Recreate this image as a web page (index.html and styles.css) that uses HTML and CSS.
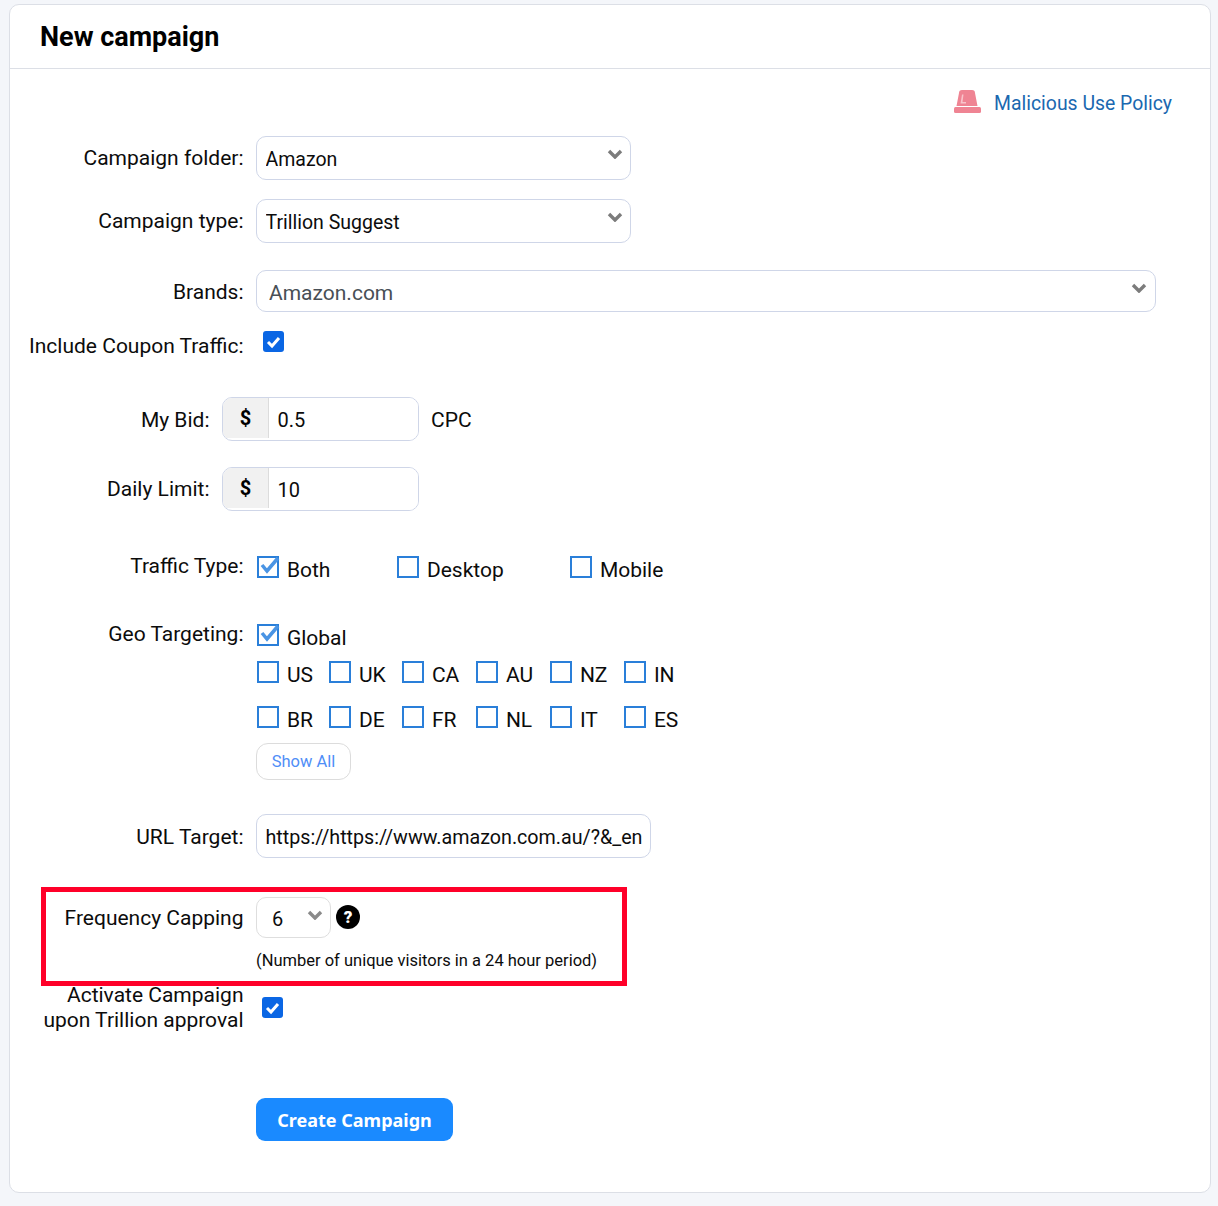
FILE: index.html
```html
<!DOCTYPE html>
<html lang="en">
<head>
<meta charset="utf-8">
<title>New campaign</title>
<link rel="stylesheet" href="styles.css">
</head>
<body>
<main class="card">
  <header class="card-head"><h1 class="title">New campaign</h1></header>
  <form class="form">
    <div class="policy">
      <svg class="siren" width="27" height="23" viewBox="0 0 27 23"><path d="M5 3a3 3 0 0 1 3-3h10a3 3 0 0 1 3 3l2.500 13h-21z" fill="#ef8493"/><path d="M8 4.500h1.500L8.500 12H12v1.500H6.500z" fill="#f8c4cb"/><rect x="0" y="17" width="27" height="6" rx="1.500" fill="#ef8493"/></svg>
      <a class="policy-link" href="#">Malicious Use Policy</a>
    </div>

    <div class="row row-folder">
      <label class="lab lab-sel">Campaign folder:</label>
      <div class="sel-wrap sel-m"><select class="sel"><option>Amazon</option></select><svg class="chev" width="16" height="10" viewBox="0 0 16 10"><path d="M2 2l6 6 6-6" fill="none" stroke="#7c7c7c" stroke-width="3.400"/></svg></div>
    </div>
    <div class="row row-type">
      <label class="lab lab-sel">Campaign type:</label>
      <div class="sel-wrap sel-m"><select class="sel"><option>Trillion Suggest</option></select><svg class="chev" width="16" height="10" viewBox="0 0 16 10"><path d="M2 2l6 6 6-6" fill="none" stroke="#7c7c7c" stroke-width="3.400"/></svg></div>
    </div>
    <div class="row row-brands">
      <label class="lab lab-brands">Brands:</label>
      <div class="sel-wrap sel-l"><select class="sel sel-brands"><option>Amazon.com</option></select><svg class="chev" width="16" height="10" viewBox="0 0 16 10"><path d="M2 2l6 6 6-6" fill="none" stroke="#7c7c7c" stroke-width="3.400"/></svg></div>
    </div>
    <div class="row row-coupon">
      <label class="lab lab-coupon">Include Coupon Traffic:</label>
      <span class="solid-box coupon-box"><svg width="21" height="21" viewBox="0 0 21 21"><path d="M5 11l4 4 7-8" fill="none" stroke="#fff" stroke-width="3"/></svg></span>
    </div>

    <div class="row row-narrow row-bid">
      <label class="lab lab-bid">My Bid:</label>
      <div class="money"><span class="addon">$</span><input class="money-input" value="0.5"></div>
      <span class="cpc">CPC</span>
    </div>
    <div class="row row-narrow row-daily">
      <label class="lab lab-sel">Daily Limit:</label>
      <div class="money"><span class="addon">$</span><input class="money-input" value="10"></div>
    </div>

    <div class="row row-traffic">
      <label class="lab lab-traffic">Traffic Type:</label>
      <div class="traffic-opts">
        <div class="opt"><span class="box"><svg class="tick" width="24" height="22" viewBox="0 0 24 22"><path d="M5 10l5 6 11-13" fill="none" stroke="#4a94e4" stroke-width="3.500"/></svg></span><span class="opt-text">Both</span></div>
        <div class="opt"><span class="box"></span><span class="opt-text">Desktop</span></div>
        <div class="opt"><span class="box"></span><span class="opt-text">Mobile</span></div>
      </div>
    </div>

    <div class="row row-geo">
      <label class="lab">Geo Targeting:</label>
      <div class="geo">
        <div class="opt opt-global"><span class="box"><svg class="tick" width="24" height="22" viewBox="0 0 24 22"><path d="M5 10l5 6 11-13" fill="none" stroke="#4a94e4" stroke-width="3.500"/></svg></span><span class="opt-text">Global</span></div>
        <div class="geo-grid">
          <div class="opt"><span class="box"></span><span class="opt-text">US</span></div>
          <div class="opt"><span class="box"></span><span class="opt-text">UK</span></div>
          <div class="opt"><span class="box"></span><span class="opt-text">CA</span></div>
          <div class="opt"><span class="box"></span><span class="opt-text">AU</span></div>
          <div class="opt"><span class="box"></span><span class="opt-text">NZ</span></div>
          <div class="opt"><span class="box"></span><span class="opt-text">IN</span></div>
          <div class="opt"><span class="box"></span><span class="opt-text">BR</span></div>
          <div class="opt"><span class="box"></span><span class="opt-text">DE</span></div>
          <div class="opt"><span class="box"></span><span class="opt-text">FR</span></div>
          <div class="opt"><span class="box"></span><span class="opt-text">NL</span></div>
          <div class="opt"><span class="box"></span><span class="opt-text">IT</span></div>
          <div class="opt"><span class="box"></span><span class="opt-text">ES</span></div>
        </div>
        <button class="show-all" type="button">Show All</button>
      </div>
    </div>

    <div class="row row-url">
      <label class="lab lab-url">URL Target:</label>
      <input class="url" value="https://https://www.amazon.com.au/?&amp;_encoding=UTF8">
    </div>

    <div class="row row-freq">
      <label class="lab lab-freq">Frequency Capping</label>
      <div class="freq">
        <div class="freq-top">
          <div class="sel-wrap sel-s"><select class="sel sel-freq"><option>6</option></select><svg class="chev" width="16" height="10" viewBox="0 0 16 10"><path d="M2 2l6 6 6-6" fill="none" stroke="#8a8a8a" stroke-width="3.400"/></svg></div>
          <span class="help">?</span>
        </div>
        <p class="note">(Number of unique visitors in a 24 hour period)</p>
      </div>
    </div>

    <div class="row row-activate">
      <label class="lab lab-activate">Activate Campaign<br>upon Trillion approval</label>
      <span class="solid-box activate-box"><svg width="21" height="21" viewBox="0 0 21 21"><path d="M5 11l4 4 7-8" fill="none" stroke="#fff" stroke-width="3"/></svg></span>
    </div>

    <div class="row row-submit">
      <span class="lab"></span>
      <button class="create" type="button">Create Campaign</button>
    </div>
  </form>
  <div class="highlight"></div>
</main>
</body>
</html>
```
FILE: styles.css
```css
* { box-sizing: border-box; }
html, body { margin: 0; padding: 0; }
body {
  background: #f4f6fa;
  padding: 4px 7px 13px 9px;
  font-family: Roboto, "Liberation Sans", sans-serif;
  font-size: 21px;
  color: #0c0c0c;
}
.card {
  position: relative;
  background: #fff;
  border: 1px solid #dcdfe6;
  border-radius: 10px;
}
.card-head {
  height: 64px;
  border-bottom: 1px solid #dcdfe6;
  padding: 15px 0 0 30px;
}
.title {
  margin: 0;
  font-size: 27px;
  line-height: 34px;
  font-weight: 700;
  color: #000;
}
.form { padding-bottom: 51px; }
.policy {
  display: flex;
  justify-content: flex-end;
  align-items: center;
  gap: 13px;
  height: 24px;
  margin-top: 22px;
  padding-right: 38px;
}
.siren { margin-top: -4px; }
.policy-link {
  margin-top: 2px;
  color: #1a68b0;
  text-decoration: none;
  font-size: 19.400px;
  line-height: 24px;
}
.row {
  display: grid;
  grid-template-columns: 233.500px auto 1fr;
  column-gap: 12.500px;
  align-items: start;
}
.row-narrow { grid-template-columns: 199.500px auto 1fr; }
.row-folder { margin-top: 21px; }
.row-type { margin-top: 19px; }
.row-brands { margin-top: 27px; }
.row-coupon { margin-top: 19px; height: 26px; }
.row-bid { margin-top: 40px; }
.row-daily { margin-top: 26px; }
.row-traffic { margin-top: 42px; }
.row-geo { margin-top: 40px; }
.row-url { margin-top: 34px; }
.row-freq { margin-top: 39px; }
.row-activate { margin-top: 11px; }
.row-submit { margin-top: 65px; }
.lab {
  display: block;
  text-align: right;
  line-height: 24px;
  white-space: nowrap;
}
.lab-sel { padding-top: 10px; }
.lab-freq { padding-top: 9px; }
.lab-bid { padding-top: 11px; }
.lab-brands { padding-top: 10px; }
.lab-coupon { padding-top: 3px; }
.lab-traffic { padding-top: 1px; }
.lab-url { padding-top: 11px; }
.lab-activate { line-height: 25px; }
.sel-wrap { position: relative; }
.sel-m { width: 375px; height: 44px; }
.sel-l { width: 900px; height: 42px; }
.sel-s { width: 75px; height: 41px; }
.sel {
  appearance: none;
  width: 100%;
  height: 100%;
  border: 1px solid #cfd6e8;
  border-radius: 10px;
  background: #fff;
  padding: 2px 8.500px 0;
  font: inherit;
  font-size: 19.500px;
  color: #0c0c0c;
}
.sel-brands { padding: 4px 12px 0; color: #484f56; font-size: 21px; }
.sel-freq { padding: 2px 15px 0; border-color: #dedede; font-size: 20px; }
.chev { position: absolute; top: 13px; right: 8px; }
.sel-l .chev { right: 9px; }
.solid-box {
  display: flex;
  width: 21px;
  height: 21px;
  background: #0a66e4;
  border-radius: 3px;
}
.coupon-box { margin-left: 7px; }
.activate-box { margin: 14px 0 0 6px; }
.money {
  display: flex;
  width: 197px;
  height: 44px;
  border: 1px solid #cfd6e8;
  border-radius: 10px;
  overflow: hidden;
}
.addon {
  width: 46px;
  height: 40px;
  flex: none;
  background: #f1f1f1;
  border-right: 1px solid #dcdcdc;
  font-size: 20px;
  font-weight: 700;
  text-align: center;
  line-height: 41px;
  color: #000;
}
.money-input {
  flex: 1;
  min-width: 0;
  border: 0;
  outline: 0;
  padding: 2px 8px 0 8.500px;
  font: inherit;
  font-size: 20px;
  color: #0c0c0c;
}
.cpc { line-height: 24px; padding-top: 11px; margin-left: -0.500px; }
.opt { display: flex; gap: 8.400px; }
.box {
  position: relative;
  display: block;
  flex: none;
  width: 22px;
  height: 22px;
  border: 2px solid #2a7fd9;
}
.tick { position: absolute; top: -3px; left: -2px; }
.opt-text { margin-top: 2px; line-height: 24px; }
.traffic-opts {
  display: grid;
  grid-template-columns: 140px 173px auto;
  margin: 3px 0 0 0.500px;
}
.geo { margin-top: 2px; }
.opt-global { margin-left: 0.500px; }
.geo-grid {
  display: grid;
  grid-template-columns: 72px 73px 74px 74px 74px auto;
  row-gap: 19px;
  margin: 11px 0 11px 0.500px;
}
.show-all {
  display: block;
  width: 95px;
  height: 37px;
  border: 1px solid #dcdcdc;
  border-radius: 12px;
  background: #fff;
  padding: 0;
  font: inherit;
  font-size: 16.500px;
  color: #4f8ef7;
}
.url {
  width: 395px;
  height: 44px;
  border: 1px solid #cfd6e8;
  border-radius: 10px;
  padding: 2px 8px 0 8.500px;
  font: inherit;
  font-size: 19.700px;
  color: #0c0c0c;
  outline: 0;
}
.freq-top { display: flex; gap: 5px; }
.help {
  width: 24px;
  height: 24px;
  margin-top: 8px;
  border-radius: 50%;
  background: #000;
  color: #fff;
  font-size: 17px;
  font-weight: 900;
  line-height: 24px;
  text-align: center;
}
.note {
  margin: 12px 0 0;
  font-size: 16.500px;
  line-height: 22px;
  white-space: nowrap;
}
.create {
  width: 197px;
  height: 43px;
  border: 0;
  border-radius: 9px;
  background: #1a8aff;
  color: #fff;
  padding: 0;
  font-family: "Noto Sans", sans-serif;
  font-weight: 700;
  font-size: 18px;
}
.highlight {
  position: absolute;
  left: 31px;
  top: 882px;
  width: 586px;
  height: 99px;
  border: 5px solid #ff0029;
  pointer-events: none;
}
```
